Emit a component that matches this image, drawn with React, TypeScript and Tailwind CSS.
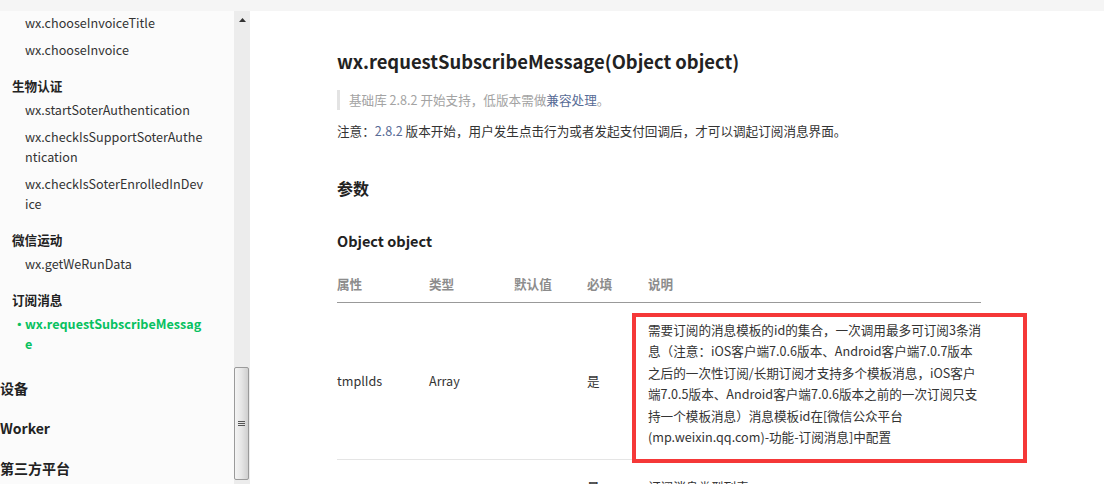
import React from "react";

type NavItem = { label: string[]; active?: boolean };
type NavGroup = { title: string; items: NavItem[] };

const groups: NavGroup[] = [
  {
    title: "",
    items: [{ label: ["wx.chooseInvoiceTitle"] }, { label: ["wx.chooseInvoice"] }],
  },
  {
    title: "生物认证",
    items: [
      { label: ["wx.startSoterAuthentication"] },
      { label: ["wx.checkIsSupportSoterAuthe", "ntication"] },
      { label: ["wx.checkIsSoterEnrolledInDev", "ice"] },
    ],
  },
  { title: "微信运动", items: [{ label: ["wx.getWeRunData"] }] },
  {
    title: "订阅消息",
    items: [{ label: ["wx.requestSubscribeMessag", "e"], active: true }],
  },
];

const topLevel = ["设备", "Worker", "第三方平台"];

const descLines = [
  "需要订阅的消息模板的id的集合，一次调用最多可订阅3条消",
  "息（注意：iOS客户端7.0.6版本、Android客户端7.0.7版本",
  "之后的一次性订阅/长期订阅才支持多个模板消息，iOS客户",
  "端7.0.5版本、Android客户端7.0.6版本之前的一次订阅只支",
  "持一个模板消息）消息模板id在[微信公众平台",
  "(mp.weixin.qq.com)-功能-订阅消息]中配置",
];

function Sidebar(): JSX.Element {
  return (
    <aside className="w-[234px] shrink-0 bg-[#fbfbfb] overflow-hidden pt-[2px] text-[12.6px] text-[#333]">
      {groups.map((g, gi) => (
        <div key={gi} className={gi === 0 ? "" : "mt-[16px]"}>
          {g.title && (
            <div className="pl-[12px] font-bold leading-[20px] text-[#222]">{g.title}</div>
          )}
          {g.items.map((it, ii) => (
            <div
              key={ii}
              className={`relative pl-[25px] leading-[20px] ${
                ii === 0 ? (g.title ? "mt-[4px]" : "") : "mt-[7px]"
              } ${it.active ? "font-bold text-[#07c160]" : ""}`}
            >
              {it.active && (
                <span className="absolute left-[13px] top-0 text-[#07c160]">•</span>
              )}
              {it.label.map((l, li) => (
                <div key={li}>{l}</div>
              ))}
            </div>
          ))}
        </div>
      ))}
      {topLevel.map((t, i) => (
        <div
          key={t}
          className={`text-[14px] font-bold leading-[24px] text-[#222] ${
            i === 0 ? "mt-[22px]" : "mt-[16px]"
          }`}
        >
          {t}
        </div>
      ))}
    </aside>
  );
}

function Scrollbar(): JSX.Element {
  return (
    <div className="w-[16px] shrink-0 bg-[#ececec] flex flex-col items-center">
      <div className="h-[17px] flex items-center justify-center">
        <svg width="7" height="4" viewBox="0 0 7 4">
          <path d="M0 4 L3.5 0 L7 4 Z" fill="#333" />
        </svg>
      </div>
      <div className="flex-1" />
      <div className="w-[15px] h-[113px] mb-[4px] mr-[1px] rounded-[2px] border border-[#9a9a9a] bg-gradient-to-r from-[#f4f4f4] via-[#e6e6e6] to-[#cfcfcf] flex flex-col items-center justify-center gap-[1px]">
        <div className="w-[7px] h-[1px] bg-[#555]" />
        <div className="w-[7px] h-[1px] bg-[#555]" />
        <div className="w-[7px] h-[1px] bg-[#555]" />
      </div>
    </div>
  );
}

function Content(): JSX.Element {
  return (
    <main className="flex-1 bg-white pl-[87px] text-[#333]">
      <div className="w-[644px]">
        <h1 className="mt-[36px] text-[18.4px] font-bold leading-[28px] text-[#222]">
          wx.requestSubscribeMessage(Object object)
        </h1>
        <div className="mt-[15px] border-l-[3px] border-[#e3e3e3] pl-[9px] text-[12.6px] leading-[20px] text-[#a3a3a3]">
          基础库 2.8.2 开始支持，低版本需做<span className="text-[#576b95]">兼容处理</span>。
        </div>
        <p className="mt-[11px] text-[12.6px] leading-[20px]">
          注意：<span className="text-[#576b95]">2.8.2</span> 版本开始，用户发生点击行为或者发起支付回调后，才可以调起订阅消息界面。
        </p>
        <h2 className="mt-[35px] text-[16px] font-bold leading-[24px] text-[#222]">参数</h2>
        <h3 className="mt-[30px] text-[14.5px] font-bold leading-[22px] text-[#222]">Object object</h3>
        <div className="mt-[14px] text-[12.6px]">
          <div className="flex border-b border-[#999] py-[8px] leading-[20px] font-semibold text-[#8c8c8c]">
            <div className="w-[92px] shrink-0">属性</div>
            <div className="w-[85px] shrink-0">类型</div>
            <div className="w-[73px] shrink-0">默认值</div>
            <div className="w-[61px] shrink-0">必填</div>
            <div className="flex-1 min-w-0">说明</div>
          </div>
          <div className="relative flex items-center border-b border-[#e5e5e5]">
            <div className="w-[92px] shrink-0">tmplIds</div>
            <div className="w-[85px] shrink-0">Array</div>
            <div className="w-[73px] shrink-0"></div>
            <div className="w-[61px] shrink-0">是</div>
            <div className="flex-1 min-w-0 pt-[16px] pb-[12px] leading-[21.4px] whitespace-nowrap">
              {descLines.map((l) => (
                <div key={l}>{l}</div>
              ))}
            </div>
            <div className="absolute left-[295px] top-[10px] w-[395px] h-[150px] border-[4px] border-[#f53838]" />
          </div>
          <div className="flex pt-[16px] leading-[21.4px]">
            <div className="w-[92px] shrink-0"></div>
            <div className="w-[85px] shrink-0"></div>
            <div className="w-[73px] shrink-0"></div>
            <div className="w-[61px] shrink-0">是</div>
            <div className="flex-1 min-w-0">订阅消息类型列表</div>
          </div>
        </div>
      </div>
    </main>
  );
}

export default function App(): JSX.Element {
  return (
    <div
      className="w-[1104px] h-[484px] overflow-hidden flex flex-col bg-white"
      style={{ fontFamily: '"Noto Sans CJK SC", "Noto Sans", sans-serif' }}
    >
      <div className="h-[11px] bg-[#f5f5f5]" />
      <div className="flex flex-1 min-h-0">
        <Sidebar />
        <Scrollbar />
        <Content />
      </div>
    </div>
  );
}
